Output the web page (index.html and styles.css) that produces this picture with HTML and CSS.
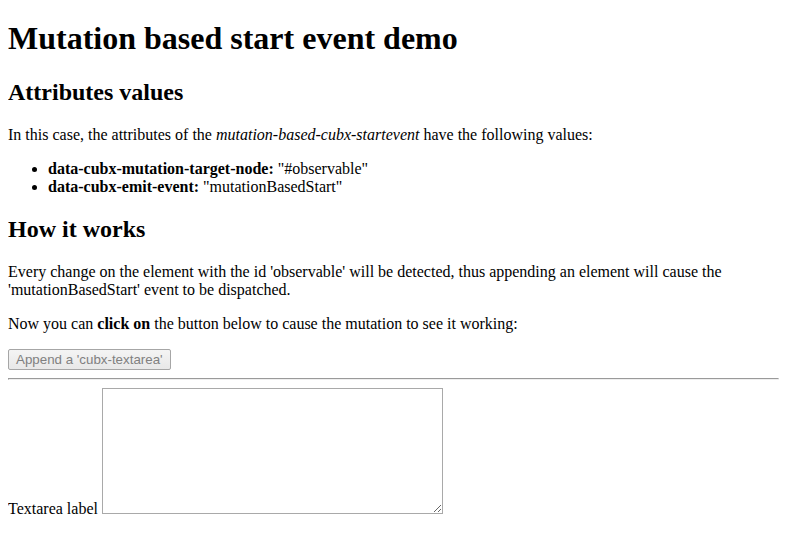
FILE: index.html
```html
<!DOCTYPE html>
<html>
<head>
<meta charset="utf-8">
<title>Mutation based start event demo</title>
<link rel="stylesheet" href="styles.css">
</head>
<body>
<h1 class="title">Mutation based start event demo</h1>
<h2>Attributes values</h2>
<p>In this case, the attributes of the <em>mutation-based-cubx-startevent</em> have the following values:</p>
<ul>
<li><strong>data-cubx-mutation-target-node:</strong> "#observable"</li>
<li><strong>data-cubx-emit-event:</strong> "mutationBasedStart"</li>
</ul>
<h2>How it works</h2>
<p>Every change on the element with the id 'observable' will be detected, thus appending an element will cause the 'mutationBasedStart' event to be dispatched.</p>
<p>Now you can <strong>click on</strong> the button below to cause the mutation to see it working:</p>
<button class="append-btn" disabled>Append a 'cubx-textarea'</button>
<hr>
<div id="observable">
<label class="ta-label" for="ta">Textarea label</label> <textarea id="ta" class="ta"></textarea>
</div>
</body>
</html>
```
FILE: styles.css
```css
body {
  font-family: "Liberation Serif", serif;
  color: #000;
  background: #fff;
}
.title {
  margin-top: 12.4px;
}
.append-btn {
  font-family: "Liberation Sans", Arial, sans-serif;
  font-size: 13.333px;
  color: #808080;
  background: linear-gradient(#f4f4f4, #e8e8e8);
  border: 1px solid #a6a6a6;
  border-radius: 2px;
  padding: 2px 7px;
}
.ta {
  width: 335px;
  height: 120px;
  border: 1px solid #a9a9a9;
  padding: 2px;
}
```
